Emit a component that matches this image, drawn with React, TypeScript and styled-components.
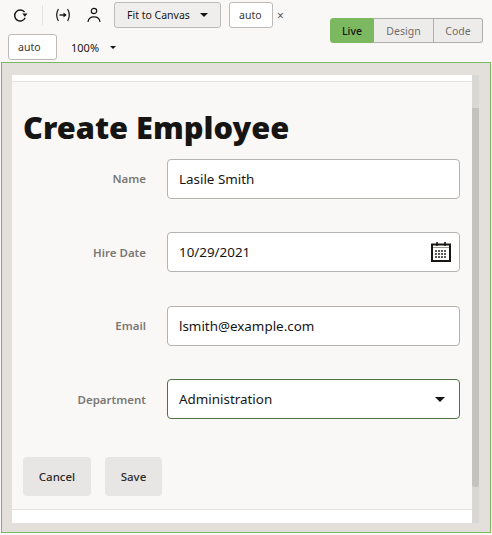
import React from 'react';
import styled, { createGlobalStyle } from 'styled-components';

const GlobalStyle = createGlobalStyle`
    html, body {
        margin: 0;
        padding: 0;
        background: #faf8f7;
    }
    body {
        font-family: "Noto Sans", "Liberation Sans", sans-serif;
        color: #161513;
    }
`;

const Screen = styled.div`
    width: 492px;
    height: 535px;
    display: flex;
    flex-direction: column;
    overflow: hidden;
`;

const Toolbar = styled.div`
    height: 62px;
    box-sizing: border-box;
    display: flex;
    justify-content: space-between;
    padding: 2px 9px 0 8px;
`;

const ToolRows = styled.div`
    display: flex;
    flex-direction: column;
    gap: 6px;
`;

const ToolRow = styled.div`
    display: flex;
    align-items: center;
    height: 26px;
`;

const IconButton = styled.div<{ $left?: number }>`
    width: 24px;
    height: 24px;
    display: flex;
    align-items: center;
    justify-content: center;
    margin-left: ${(p) => p.$left ?? 0}px;
    color: #161513;
`;

const Divider = styled.div`
    width: 1px;
    height: 20px;
    background: #e6e4e1;
    margin: 0 8px 0 10px;
`;

const FitButton = styled.div`
    width: 107px;
    height: 26px;
    box-sizing: border-box;
    margin-left: 8px;
    padding: 0 12px;
    display: flex;
    align-items: center;
    justify-content: space-between;
    background: #f0eeec;
    border: 1px solid #bdbbb8;
    border-radius: 3px;
    font-size: 10.5px;
`;

const Caret = styled.span<{ $size?: number; $right?: number }>`
    width: 0;
    height: 0;
    margin-right: ${(p) => p.$right ?? 0}px;
    border-left: ${(p) => p.$size ?? 4}px solid transparent;
    border-right: ${(p) => p.$size ?? 4}px solid transparent;
    border-top: ${(p) => p.$size ?? 4}px solid #161513;
`;

const SizeInput = styled.div<{ $left?: number; $width: number }>`
    width: ${(p) => p.$width}px;
    height: 26px;
    box-sizing: border-box;
    margin-left: ${(p) => p.$left ?? 0}px;
    padding-left: 9px;
    display: flex;
    align-items: center;
    background: #ffffff;
    border: 1px solid #bdbbb8;
    border-radius: 3px;
    font-size: 10.5px;
    color: #3a3835;
`;

const Times = styled.span`
    margin-left: 4px;
    font-size: 12px;
    color: #5b5a57;
`;

const Zoom = styled.div`
    display: flex;
    align-items: center;
    gap: 11px;
    margin-left: 14px;
    font-size: 11px;
`;

const Segments = styled.div`
    display: flex;
    height: 25px;
    margin-top: 16px;
    font-size: 10.5px;
`;

const Segment = styled.div<{ $active?: boolean; $width: number }>`
    width: ${(p) => p.$width}px;
    box-sizing: border-box;
    display: flex;
    align-items: center;
    justify-content: center;
    font-weight: ${(p) => (p.$active ? 500 : 400)};
    color: ${(p) => (p.$active ? '#161513' : '#6f6d6a')};
    background: ${(p) => (p.$active ? '#7cb85f' : '#eeecea')};
    border: 1px solid ${(p) => (p.$active ? '#7cb85f' : '#b0aeab')};
    border-left-width: ${(p) => (p.$active ? 1 : 0)}px;
    &:first-child {
        border-radius: 3px 0 0 3px;
    }
    &:last-child {
        border-radius: 0 3px 3px 0;
    }
`;

const Canvas = styled.div`
    width: 490px;
    height: 471px;
    box-sizing: border-box;
    margin-left: 1px;
    padding: 12px 11px 9px 10px;
    display: flex;
    background: #e3e0db;
    border: 1px solid #7cb85f;
`;

const PageFrame = styled.div`
    flex: 1;
    display: flex;
    flex-direction: column;
    background: #ffffff;
`;

const WhiteStrip = styled.div<{ $height: number }>`
    height: ${(p) => p.$height}px;
    flex: none;
    background: #ffffff;
`;

const Form = styled.div`
    flex: 1;
    padding: 0 11px;
    background: #faf8f7;
    border-top: 1px solid #e6e4e1;
    border-bottom: 1px solid #e6e4e1;
`;

const Title = styled.h1`
    margin: 23px 0 9.6px;
    font-size: 30.75px;
    line-height: 44px;
    font-weight: 900;
    color: #161513;
`;

const Field = styled.div`
    display: grid;
    grid-template-columns: 123px 293px;
    column-gap: 21px;
    align-items: center;
    margin-top: 33.5px;
    &:first-of-type {
        margin-top: 0;
    }
`;

const Label = styled.label`
    text-align: right;
    font-size: 11.5px;
    font-weight: 600;
    color: #7a7875;
`;

const Control = styled.div<{ $focus?: boolean }>`
    height: 40px;
    box-sizing: border-box;
    padding: 0 11px;
    display: flex;
    align-items: center;
    justify-content: space-between;
    background: #ffffff;
    border: 1px solid ${(p) => (p.$focus ? '#4f7345' : '#b5b3b0')};
    border-radius: 4px;
    font-size: 13.4px;
    color: #161513;
`;

const CalendarSlot = styled.span`
    display: flex;
    margin-right: -4px;
`;

const Actions = styled.div`
    display: flex;
    gap: 14px;
    margin-top: 38px;
`;

const ActionButton = styled.div<{ $width: number }>`
    width: ${(p) => p.$width}px;
    height: 39px;
    display: flex;
    align-items: center;
    justify-content: center;
    background: #e8e6e4;
    border-radius: 4px;
    font-size: 11.5px;
    font-weight: 500;
    color: #2c2a28;
`;

const Track = styled.div`
    width: 7px;
    flex: none;
    padding-top: 33px;
    box-sizing: border-box;
    background: #dad8d4;
`;

const Thumb = styled.div`
    height: 379px;
    background: #c4c2be;
    border-radius: 0 0 2px 2px;
`;

const RefreshIcon = () => (
    <svg width="16" height="16" viewBox="0 0 16 16" fill="none" stroke="currentColor" strokeWidth="1.4">
        <path d="M13.2 10.8A5.5 5.5 0 1 1 12.6 5.2" />
        <path d="M10.3 6.6h5.2L12.9 9.8z" fill="currentColor" stroke="none" />
    </svg>
);

const VariableIcon = () => (
    <svg width="16" height="16" viewBox="0 0 16 16" fill="none" stroke="currentColor" strokeWidth="1.2">
        <path d="M3.4 2C1.4 5.5 1.4 10.500 3.4 14M12.6 2c2 3.500 2 8.500 0 12" />
        <path d="M4.5 8h6.500" strokeWidth="1.4" />
        <path d="M8.500 5.500 11.500 8l-3 2.500z" fill="currentColor" stroke="none" />
    </svg>
);

const PersonIcon = () => (
    <svg width="14" height="16" viewBox="0 0 14 16" fill="none" stroke="currentColor" strokeWidth="1.2">
        <circle cx="7" cy="4" r="2.700" />
        <path d="M1 15c.3-3.600 2.800-5.200 6-5.200s5.700 1.600 6 5.200" />
    </svg>
);

const CalendarIcon = () => (
    <svg width="22" height="22" viewBox="0 0 22 22" fill="none">
        <rect x="2" y="3.500" width="18" height="16.500" fill="#ffffff" stroke="#161513" strokeWidth="2" />
        <path d="M3 6.500h16" stroke="#9a9895" strokeWidth="1" />
        <path d="M7 1v4M15 1v4" stroke="#161513" strokeWidth="1.600" />
        <path d="M5 10h12M5 13h12M5 16h12" stroke="#5d5b58" strokeWidth="2" strokeDasharray="2 1" />
    </svg>
);

export default function App() {
    return (
        <Screen>
            <GlobalStyle />
            <Toolbar>
                <ToolRows>
                    <ToolRow>
                        <IconButton>
                            <RefreshIcon />
                        </IconButton>
                        <Divider />
                        <IconButton>
                            <VariableIcon />
                        </IconButton>
                        <IconButton $left={7}>
                            <PersonIcon />
                        </IconButton>
                        <FitButton>
                            Fit to Canvas
                            <Caret />
                        </FitButton>
                        <SizeInput $left={8} $width={44}>
                            auto
                        </SizeInput>
                        <Times>×</Times>
                    </ToolRow>
                    <ToolRow>
                        <SizeInput $width={49}>auto</SizeInput>
                        <Zoom>
                            100%
                            <Caret $size={3.5} />
                        </Zoom>
                    </ToolRow>
                </ToolRows>
                <Segments>
                    <Segment $active $width={44}>
                        Live
                    </Segment>
                    <Segment $width={60}>Design</Segment>
                    <Segment $width={49}>Code</Segment>
                </Segments>
            </Toolbar>
            <Canvas>
                <PageFrame>
                    <WhiteStrip $height={6} />
                    <Form>
                        <Title>Create Employee</Title>
                        <Field>
                            <Label>Name</Label>
                            <Control>Lasile Smith</Control>
                        </Field>
                        <Field>
                            <Label>Hire Date</Label>
                            <Control>
                                10/29/2021
                                <CalendarSlot>
                                    <CalendarIcon />
                                </CalendarSlot>
                            </Control>
                        </Field>
                        <Field>
                            <Label>Email</Label>
                            <Control>lsmith@example.com</Control>
                        </Field>
                        <Field>
                            <Label>Department</Label>
                            <Control $focus>
                                Administration
                                <Caret $size={5.5} $right={3} />
                            </Control>
                        </Field>
                        <Actions>
                            <ActionButton $width={68}>Cancel</ActionButton>
                            <ActionButton $width={57}>Save</ActionButton>
                        </Actions>
                    </Form>
                    <WhiteStrip $height={13} />
                </PageFrame>
                <Track>
                    <Thumb />
                </Track>
            </Canvas>
        </Screen>
    );
}
